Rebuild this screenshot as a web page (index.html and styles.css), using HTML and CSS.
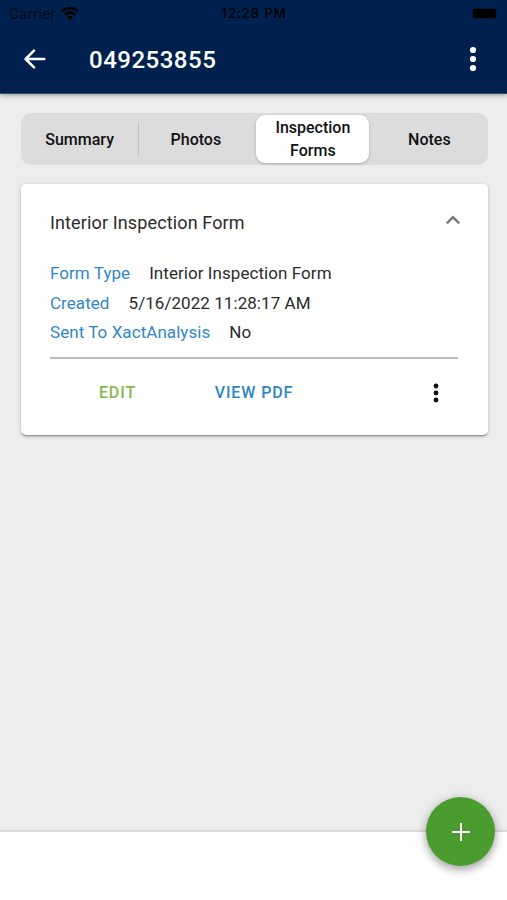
FILE: index.html
```html
<!DOCTYPE html>
<html lang="en">
<head>
<meta charset="utf-8">
<title>Inspection Forms</title>
<link rel="stylesheet" href="styles.css">
</head>
<body>
<div class="app">
  <header class="header">
    <div class="status">
      <div class="carrier"><span>Carrier</span>
        <svg class="wifi" width="18" height="14" viewBox="0 0 18 14" fill="none" stroke="#000" stroke-width="2.6"><path d="M1 5.2C5.6.9 12.4.9 17 5.2"/><path d="M4 8.6c2.9-2.7 7.1-2.7 10 0"/><path d="M9 14l-2.9-3.1c1.7-1.5 4.1-1.5 5.8 0z" fill="#000" stroke="none"/></svg>
      </div>
      <div class="clock"><span>12:28 PM</span></div>
      <div class="power"><span class="battery"></span></div>
    </div>
    <div class="toolbar">
      <svg class="back" width="22" height="20" viewBox="0 0 22 20" fill="none" stroke="#fff" stroke-width="2.5" stroke-linecap="round" stroke-linejoin="round"><path d="M10 1.6L1.6 10l8.4 8.4M2 10h18.3"/></svg>
      <h1 class="title"><span>049253855</span></h1>
      <svg class="more" width="8" height="26" viewBox="0 0 8 26" fill="#fff"><circle cx="4" cy="4" r="3.1"/><circle cx="4" cy="13" r="3.1"/><circle cx="4" cy="22" r="3.1"/></svg>
    </div>
  </header>
  <main class="content">
    <nav class="tabs">
      <div class="tab divided"><span>Summary</span></div>
      <div class="tab"><span>Photos</span></div>
      <div class="tab active"><span>Inspection<br>Forms</span></div>
      <div class="tab"><span>Notes</span></div>
    </nav>
    <section class="card">
      <div class="card-head">
        <h2><span>Interior Inspection Form</span></h2>
        <svg class="chevron" width="16" height="12" viewBox="0 0 16 12" fill="none" stroke="#757575" stroke-width="2.3"><path d="M1.8 9.4L8 3.2l6.2 6.2"/></svg>
      </div>
      <dl class="details">
        <div><dt>Form Type</dt><dd>Interior Inspection Form</dd></div>
        <div><dt>Created</dt><dd>5/16/2022 11:28:17 AM</dd></div>
        <div><dt>Sent To XactAnalysis</dt><dd>No</dd></div>
      </dl>
      <div class="actions">
        <div class="action edit"><span>EDIT</span></div>
        <div class="action view"><span>VIEW PDF</span></div>
        <div class="action"><svg class="dots" width="6" height="20" viewBox="0 0 6 20" fill="#111"><circle cx="3" cy="3" r="2.4"/><circle cx="3" cy="10" r="2.4"/><circle cx="3" cy="17" r="2.4"/></svg></div>
      </div>
    </section>
  </main>
  <footer class="footer"></footer>
  <button class="fab" aria-label="Add"><svg width="20" height="20" viewBox="0 0 20 20" stroke="#fff" stroke-width="2"><path d="M10 1v18M1 10h18"/></svg></button>
</div>
</body>
</html>
```

FILE: styles.css
```css
* { box-sizing: border-box; margin: 0; }
body { font-family: Roboto, sans-serif; color: #2b2b2b; }
.app { position: relative; height: 900px; display: flex; flex-direction: column; background: #ededed; overflow: hidden; }
.header { height: 94px; background: #00214d; border-bottom: 1px solid #31496b; box-shadow: 0 1px 5px rgba(0,0,0,.4); z-index: 1; }
.status { height: 27px; display: grid; grid-template-columns: 1fr auto 1fr; align-items: center; padding: 0 11px 0 9px; color: #000; font: 14px/27px Inter, sans-serif; }
.carrier { display: flex; align-items: center; gap: 5px; color: #000a1c; letter-spacing: .15px; }
.wifi { margin-top: -1px; }
.clock { padding-left: 3px; font-size: 13.5px; font-weight: 500; letter-spacing: .75px; }
.power { display: flex; justify-content: flex-end; }
.battery { width: 23px; height: 9px; border-radius: 2px; background: #000; box-shadow: 0 0 2px #000; }
.toolbar { display: flex; align-items: center; height: 64px; padding: 0 30px 0 24px; }
.title { flex: 1; margin-left: 43px; padding-top: 2px; color: #fff; font-size: 24px; font-weight: 500; line-height: 30px; letter-spacing: .5px; }
.content { flex: none; height: 738px; padding: 19px 19.5px 0 20.5px; border-bottom: 2px solid #d9d9d9; }
.tabs { display: grid; grid-template-columns: repeat(4, 1fr); height: 52px; padding: 2px 1px; background: #dcdcdc; border-radius: 10px; }
.tab { position: relative; display: flex; align-items: center; justify-content: center; text-align: center; color: #111; font-size: 16px; font-weight: 500; line-height: 23px; }
.tab:last-child { padding-left: 2px; }
.tab.divided::after { content: ""; position: absolute; right: -1px; top: 7px; bottom: 7px; width: 1px; background: #c2c2c2; }
.tab.active { margin: 0 1.5px 0 2px; padding-left: 1px; background: #fff; border-radius: 9px; box-shadow: 0 1px 3px rgba(0,0,0,.22); }
.card { margin-top: 19px; height: 251px; padding: 23px 29.5px 0; background: #fff; border-radius: 5px; box-shadow: 0 2px 2px -1px rgba(0,0,0,.4), 0 1px 4px rgba(0,0,0,.18); }
.card-head { display: flex; justify-content: space-between; height: 52px; }
.chevron { margin: 7px -3px 0 0; }
.card h2 { font-size: 18px; font-weight: 400; line-height: 31px; letter-spacing: .13px; }
.details { height: 100px; border-bottom: 2px solid #bdbdbd; }
.details div { display: flex; gap: 19px; font-size: 17px; line-height: 29.5px; letter-spacing: .06px; }
.details dt { color: #3187c9; }
.actions { display: grid; grid-template-columns: 135px 138px 1fr; height: 68px; font-size: 16px; font-weight: 500; letter-spacing: .9px; }
.action { display: flex; align-items: center; justify-content: center; }
.edit, .view { padding-bottom: 1px; }
.action:last-child { padding-left: 91px; }
.edit { color: #82b94b; }
.view { color: #2e86c5; }
.footer { flex: 1; background: #fff; }
.fab { position: absolute; left: 426px; top: 797px; width: 69px; height: 69px; border: 0; padding: 0; border-radius: 50%; background: #4a9c2f; display: flex; align-items: center; justify-content: center; box-shadow: 0 4px 9px rgba(0,0,0,.3), 0 1px 12px rgba(0,0,0,.12); z-index: 2; }
```
